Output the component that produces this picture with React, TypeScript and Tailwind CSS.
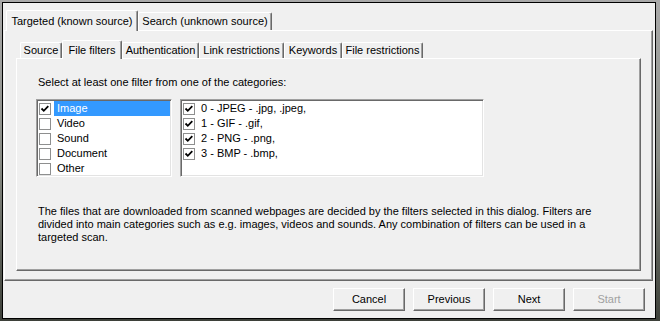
import React from 'react';

const categories = ['Image', 'Video', 'Sound', 'Document', 'Other'];
const filters = ['0 - JPEG - .jpg, .jpeg,', '1 - GIF - .gif,', '2 - PNG - .png,', '3 - BMP - .bmp,'];

const Check = ({ checked }: { checked: boolean }) => (
  <svg width="12" height="12" viewBox="0 0 12 12" className="shrink-0">
    <rect x="0.5" y="0.5" width="11" height="11" fill="#fff" stroke="#8e8f8f" />
    {checked && (
      <path d="M2.5 5.5 L4.8 7.8 L9.3 3.2" fill="none" stroke="#000" strokeWidth="1.8" />
    )}
  </svg>
);

const Tab = ({ label, width, selected, h }: { label: string; width: number; selected?: boolean; h: number }) => (
  <div
    style={{ width, height: selected ? h + 1 : h }}
    className={
      'flex items-center justify-center rounded-t-[2px] border-t border-l border-r border-t-white border-l-white border-r-[#696969] bg-[#f0f0f0] shadow-[inset_-1px_0_0_#a0a0a0] ' +
      (selected ? 'relative z-10 -mb-px' : '')
    }
  >
    <span className="whitespace-nowrap">{label}</span>
  </div>
);

const Button = ({ label, disabled }: { label: string; disabled?: boolean }) => (
  <div
    className={
      'flex h-[23px] w-[72px] items-center justify-center border border-t-white border-l-white border-r-[#696969] border-b-[#696969] bg-[#f0f0f0] shadow-[inset_-1px_-1px_0_#a0a0a0] ' +
      (disabled ? 'text-[#a0a0a0]' : 'text-black')
    }
  >
    {label}
  </div>
);

const listBox =
  'h-[78px] border border-t-[#a0a0a0] border-l-[#a0a0a0] border-r-white border-b-white bg-white shadow-[inset_1px_1px_0_#696969,inset_-1px_-1px_0_#e3e3e3] p-px';

export default function App() {
  return (
    <div className="h-[321px] w-[660px] bg-gradient-to-b from-[#a9a9a9] via-[#8a8d86] to-[#3d4039] pl-[2px] pt-[2px] font-['Liberation_Sans',Arial,sans-serif] text-[11px] text-black">
      <div className="flex h-[317px] w-[654px] flex-col border border-black bg-[#f0f0f0]">
        {/* outer tabs */}
        <div className="flex h-[27px] items-end pl-[3px]">
          <Tab label="Targeted (known source)" width={132} h={20} selected />
          <Tab label="Search (unknown source)" width={134} h={18} />
        </div>
        <div className="ml-px flex h-[251px] w-[649px] flex-col border border-t-white border-l-white border-r-[#696969] border-b-[#696969] shadow-[inset_-1px_-1px_0_#a0a0a0]">
          {/* inner tabs */}
          <div className="flex h-[27px] items-end pl-[15px]">
            <Tab label="Source" width={42} h={16} />
            <Tab label="File filters" width={60} h={18} selected />
            <Tab label="Authentication" width={77} h={16} />
            <Tab label="Link restrictions" width={85} h={16} />
            <Tab label="Keywords" width={58} h={16} />
            <Tab label="File restrictions" width={81} h={16} />
          </div>
          <div className="ml-[11px] h-[213px] w-[625px] border border-t-white border-l-white border-r-[#696969] border-b-[#696969] pl-[19px] pt-[17px] shadow-[inset_-1px_-1px_0_#a0a0a0]">
            <p className="ml-[2px] leading-[13px]">Select at least one filter from one of the categories:</p>
            <div className="mt-[10px] flex gap-[8px]">
              <div className={listBox + ' w-[136px]'}>
                {categories.map((c, i) => (
                  <div key={c} className="flex h-[15px] items-center pl-[1px]">
                    <Check checked={i === 0} />
                    <div
                      className={
                        'ml-[3px] flex h-[15px] flex-1 items-center pl-[3px] ' +
                        (i === 0 ? 'bg-[#3399ff] text-white' : '')
                      }
                    >
                      {c}
                    </div>
                  </div>
                ))}
              </div>
              <div className={listBox + ' w-[304px]'}>
                {filters.map((f) => (
                  <div key={f} className="flex h-[15px] items-center pl-[1px]">
                    <Check checked />
                    <span className="ml-[6px]">{f}</span>
                  </div>
                ))}
              </div>
            </div>
            <p className="ml-[2px] mt-[28px] w-[570px] leading-[13px]">
              The files that are downloaded from scanned webpages are decided by the filters selected in this dialog. Filters are divided into main categories such as e.g. images, videos and sounds. Any combination of filters can be used in a targeted scan.
            </p>
          </div>
        </div>
        <div className="mr-[10px] mt-[7px] flex justify-end gap-[8px]">
          <Button label="Cancel" />
          <Button label="Previous" />
          <Button label="Next" />
          <Button label="Start" disabled />
        </div>
      </div>
    </div>
  );
}
